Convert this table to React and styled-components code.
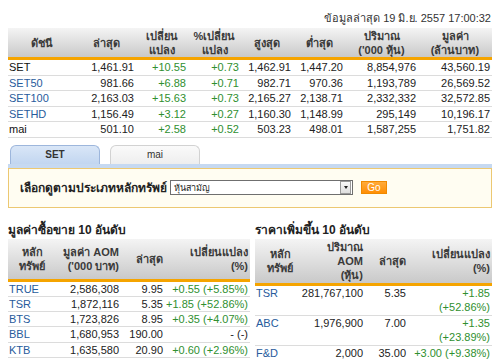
import React from 'react';
import styled, { createGlobalStyle } from 'styled-components';

const Global = createGlobalStyle`
  html, body { margin: 0; padding: 0; background: #fff; }
  body {
    font-family: Tahoma, "Liberation Sans", "Noto Sans", sans-serif;
    font-size: 11px;
    color: #222;
  }
`;

const Page = styled.div`
  width: 484px;
  padding: 0 8px;
`;

const Stamp = styled.div`
  height: 28px;
  box-sizing: border-box;
  padding: 11px 1px 0 0;
  line-height: 14px;
  text-align: right;
  color: #333;
`;

const Grid = styled.div`
  display: grid;
  grid-template-columns: ${(p) => p.$cols};
`;

const Head = styled(Grid)`
  height: ${(p) => p.$h}px;
  background: linear-gradient(#f4f4f4, #c9c9c9);
  border-bottom: 3px solid #f5a400;
  font-weight: bold;
  color: #3a3a3a;
`;

const HCell = styled.div`
  display: flex;
  flex-direction: column;
  justify-content: center;
  align-items: ${(p) => (p.$center ? 'center' : 'flex-end')};
  text-align: ${(p) => (p.$center ? 'center' : 'right')};
  padding-right: ${(p) => (p.$center ? 0 : 2)}px;
  line-height: 14px;
  white-space: nowrap;
`;

const Row = styled(Grid)`
  border-bottom: ${(p) => (p.$last ? 'none' : '1px solid #dcdcdc')};
  line-height: ${(p) => p.$lh}px;
`;

const Cell = styled.div`
  display: flex;
  flex-direction: column;
  align-items: flex-end;
  padding-right: 2px;
  white-space: nowrap;
  min-width: 0;
  color: ${(p) => (p.$green ? '#2f8f2f' : '#222')};
`;

const Name = styled.div`
  padding-left: 1px;
  white-space: nowrap;
  color: ${(p) => (p.$plain ? '#111' : '#275b9c')};
`;

const Tabs = styled.div`
  display: flex;
  gap: 10px;
  padding-left: 2px;
  margin-top: 7px;
`;

const Tab = styled.div`
  width: 90px;
  height: 19px;
  box-sizing: border-box;
  border: 1px solid ${(p) => (p.$active ? '#9db6dc' : '#d2d2d2')};
  border-bottom: none;
  border-radius: 6px 6px 0 0;
  background: ${(p) =>
    p.$active ? 'linear-gradient(#d9e6f7, #c2d6f0)' : 'linear-gradient(#fafafa, #eeeeee)'};
  font-size: 10px;
  font-weight: ${(p) => (p.$active ? 'bold' : 'normal')};
  color: #333;
  display: flex;
  align-items: center;
  justify-content: center;
`;

const Strip = styled.div`
  height: 4px;
  background: #c6d9f1;
`;

const Panel = styled.div`
  height: 40px;
  box-sizing: border-box;
  border: 1px solid #ecc872;
  background: #fffdf2;
  display: flex;
  align-items: center;
  padding-left: 11px;
`;

const Label = styled.div`
  font-weight: bold;
  font-size: 12px;
  color: #222;
  margin-right: 3px;
`;

const Select = styled.div`
  width: 183px;
  height: 15px;
  box-sizing: border-box;
  border: 1px solid #6f6f6f;
  background: #fff;
  display: flex;
  align-items: center;
  justify-content: space-between;
  font-size: 9px;
  padding-left: 3px;
`;

const Arrow = styled.div`
  width: 9px;
  height: 11px;
  margin-right: 1px;
  border: 1px solid #9a9a9a;
  background: linear-gradient(#fafafa, #dedede);
  display: flex;
  align-items: center;
  justify-content: center;
  &::after {
    content: '';
    border-left: 2.5px solid transparent;
    border-right: 2.5px solid transparent;
    border-top: 3px solid #222;
  }
`;

const Go = styled.div`
  width: 26px;
  height: 13px;
  margin-left: 8px;
  box-sizing: border-box;
  border: 1px solid #f08a00;
  background: linear-gradient(#ffab3a, #ff8e05);
  color: #fff;
  font-size: 10px;
  display: flex;
  align-items: center;
  justify-content: center;
`;

const Lower = styled.div`
  display: grid;
  grid-template-columns: 242px 237px;
  column-gap: 5px;
  margin-top: 14px;
`;

const Title = styled.div`
  height: 17px;
  line-height: 16px;
  font-weight: bold;
  font-size: 12px;
  color: #222;
`;

const mainCols = '68px 60px 52px 53px 52px 52px 73px 74px';
const leftCols = '48px 65px 44px 85px';
const rightCols = '50px 60px 43px 84px';

const mainData = [
  ['SET', '1,461.91', '+10.55', '+0.73', '1,462.91', '1,447.20', '8,854,976', '43,560.19', true],
  ['SET50', '981.66', '+6.88', '+0.71', '982.71', '970.36', '1,193,789', '26,569.52'],
  ['SET100', '2,163.03', '+15.63', '+0.73', '2,165.27', '2,138.71', '2,332,332', '32,572.85'],
  ['SETHD', '1,156.49', '+3.12', '+0.27', '1,160.30', '1,148.99', '295,149', '10,196.17'],
  ['mai', '501.10', '+2.58', '+0.52', '503.23', '498.01', '1,587,255', '1,751.82', true],
];

const leftData = [
  ['TRUE', '2,586,308', '9.95', '+0.55 (+5.85%)', true],
  ['TSR', '1,872,116', '5.35', '+1.85 (+52.86%)', true],
  ['BTS', '1,723,826', '8.95', '+0.35 (+4.07%)', true],
  ['BBL', '1,680,953', '190.00', '- (-)', false],
  ['KTB', '1,635,580', '20.90', '+0.60 (+2.96%)', true],
];

const rightData = [
  ['TSR', '281,767,100', '5.35', ['+1.85', '(+52.86%)']],
  ['ABC', '1,976,900', '7.00', ['+1.35', '(+23.89%)']],
  ['F&D', '2,000', '35.00', ['+3.00 (+9.38%)']],
];

export default function App() {
  return (
    <>
      <Global />
      <Page>
        <Stamp>ข้อมูลล่าสุด 19 มิ.ย. 2557 17:00:32</Stamp>

        <Head $cols={mainCols} $h={29}>
          <HCell $center>ดัชนี</HCell>
          <HCell $center>ล่าสุด</HCell>
          <HCell $center><span>เปลี่ยน</span><span>แปลง</span></HCell>
          <HCell $center><span>%เปลี่ยน</span><span>แปลง</span></HCell>
          <HCell $center>สูงสุด</HCell>
          <HCell $center>ต่ำสุด</HCell>
          <HCell $center><span>ปริมาณ</span><span>('000 หุ้น)</span></HCell>
          <HCell $center><span>มูลค่า</span><span>(ล้านบาท)</span></HCell>
        </Head>
        {mainData.map((r) => (
          <Row key={r[0]} $cols={mainCols} $lh={14.5}>
            <Name $plain={r[8]}>{r[0]}</Name>
            <Cell>{r[1]}</Cell>
            <Cell $green>{r[2]}</Cell>
            <Cell $green>{r[3]}</Cell>
            <Cell>{r[4]}</Cell>
            <Cell>{r[5]}</Cell>
            <Cell>{r[6]}</Cell>
            <Cell>{r[7]}</Cell>
          </Row>
        ))}

        <Tabs>
          <Tab $active>SET</Tab>
          <Tab>mai</Tab>
        </Tabs>
        <Strip />
        <Panel>
          <Label>เลือกดูตามประเภทหลักทรัพย์</Label>
          <Select>
            <span>หุ้นสามัญ</span>
            <Arrow />
          </Select>
          <Go>Go</Go>
        </Panel>

        <Lower>
          <div>
            <Title>มูลค่าซื้อขาย 10 อันดับ</Title>
            <Head $cols={leftCols} $h={40}>
              <HCell $center><span>หลัก</span><span>ทรัพย์</span></HCell>
              <HCell><span>มูลค่า AOM</span><span>('000 บาท)</span></HCell>
              <HCell>ล่าสุด</HCell>
              <HCell><span>เปลี่ยนแปลง</span><span>(%)</span></HCell>
            </Head>
            {leftData.map((r) => (
              <Row key={r[0]} $cols={leftCols} $lh={14.25}>
                <Name>{r[0]}</Name>
                <Cell>{r[1]}</Cell>
                <Cell>{r[2]}</Cell>
                <Cell $green={r[4]}>{r[3]}</Cell>
              </Row>
            ))}
          </div>
          <div>
            <Title>ราคาเพิ่มขึ้น 10 อันดับ</Title>
            <Head $cols={rightCols} $h={44}>
              <HCell $center><span>หลัก</span><span>ทรัพย์</span></HCell>
              <HCell><span>ปริมาณ</span><span>AOM</span><span>(หุ้น)</span></HCell>
              <HCell>ล่าสุด</HCell>
              <HCell><span>เปลี่ยนแปลง</span><span>(%)</span></HCell>
            </Head>
            {rightData.map((r, i) => (
              <Row key={r[0]} $cols={rightCols} $lh={14.5} $last={i === rightData.length - 1}>
                <Name>{r[0]}</Name>
                <Cell>{r[1]}</Cell>
                <Cell>{r[2]}</Cell>
                <Cell $green>
                  {r[3].map((t) => (
                    <span key={t}>{t}</span>
                  ))}
                </Cell>
              </Row>
            ))}
          </div>
        </Lower>
      </Page>
    </>
  );
}
